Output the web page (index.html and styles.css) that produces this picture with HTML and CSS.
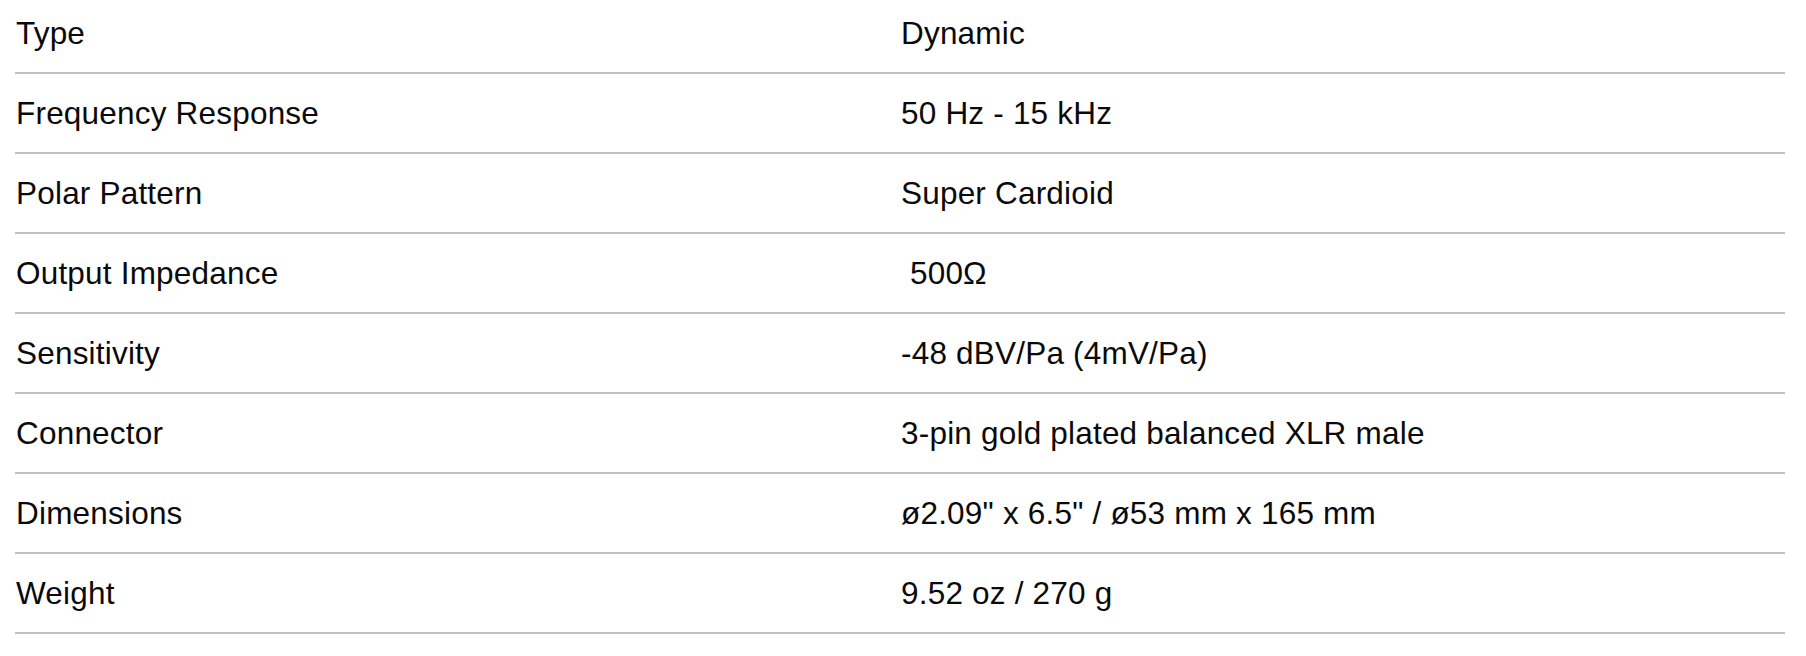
FILE: index.html
```html
<!DOCTYPE html>
<html lang="en">
<head>
<meta charset="utf-8">
<title>Specifications</title>
<link rel="stylesheet" href="styles.css">
</head>
<body>
<div class="page">
  <dl class="specs">
    <div class="row"><dt>Type</dt><dd>Dynamic</dd></div>
    <div class="row"><dt>Frequency Response</dt><dd>50 Hz - 15 kHz</dd></div>
    <div class="row"><dt>Polar Pattern</dt><dd>Super Cardioid</dd></div>
    <div class="row"><dt>Output Impedance</dt><dd>&nbsp;500Ω</dd></div>
    <div class="row"><dt>Sensitivity</dt><dd>-48 dBV/Pa (4mV/Pa)</dd></div>
    <div class="row"><dt>Connector</dt><dd>3-pin gold plated balanced XLR male</dd></div>
    <div class="row"><dt>Dimensions</dt><dd>ø2.09" x 6.5" / ø53 mm x 165 mm</dd></div>
    <div class="row"><dt>Weight</dt><dd>9.52 oz / 270 g</dd></div>
  </dl>
</div>
</body>
</html>
```
FILE: styles.css
```css
html, body {
  margin: 0;
  padding: 0;
  background: #ffffff;
}

.page {
  padding: 0 21px 0 15px;
  font-family: "Liberation Sans", Arial, sans-serif;
  font-size: 31.5px;
  line-height: 36px;
  letter-spacing: 0.2px;
  color: #0a0a0a;
}

.specs {
  margin: 0;
}

.row {
  display: grid;
  grid-template-columns: 1fr 1fr;
  padding: 21px 0;
  border-bottom: 2px solid #c1c1c1;
}

.row:first-child {
  padding-top: 15px;
}

.row dt,
.row dd {
  margin: 0;
  padding-left: 1px;
  white-space: nowrap;
}
```
